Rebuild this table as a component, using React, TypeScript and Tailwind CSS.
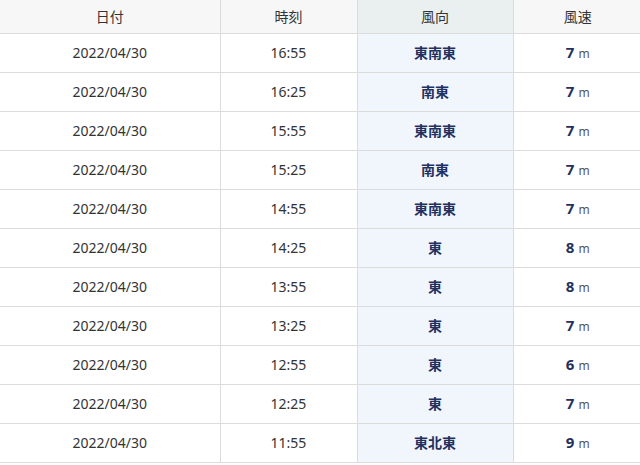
const ROWS: [string, string, string, number][] = [
  ['2022/04/30', '16:55', '東南東', 7],
  ['2022/04/30', '16:25', '南東', 7],
  ['2022/04/30', '15:55', '東南東', 7],
  ['2022/04/30', '15:25', '南東', 7],
  ['2022/04/30', '14:55', '東南東', 7],
  ['2022/04/30', '14:25', '東', 8],
  ['2022/04/30', '13:55', '東', 8],
  ['2022/04/30', '13:25', '東', 7],
  ['2022/04/30', '12:55', '東', 6],
  ['2022/04/30', '12:25', '東', 7],
  ['2022/04/30', '11:55', '東北東', 9],
]

const FONT = 'font-["Noto_Sans","Noto_Sans_CJK_JP",sans-serif]'

export default function App() {
  return (
    <div className={`w-[640px] h-[465px] overflow-hidden bg-white text-[#333] ${FONT}`}>
      <table className="w-[642px] border-collapse table-fixed text-[14px]">
        <colgroup>
          <col className="w-[220px]" />
          <col className="w-[137px]" />
          <col className="w-[156px]" />
          <col className="w-[129px]" />
        </colgroup>
        <thead>
          <tr className="h-[33px] bg-[#f7f7f7] border-b border-[#dcdcdc]">
            <th className="font-normal border-r border-[#dcdcdc]">日付</th>
            <th className="font-normal border-r border-[#dcdcdc]">時刻</th>
            <th className="font-normal border-r border-[#dcdcdc] bg-[#eaf0f0]">風向</th>
            <th className="font-normal">風速</th>
          </tr>
        </thead>
        <tbody>
          {ROWS.map(([date, time, dir, speed], i) => (
            <tr key={i} className="h-[39px] border-b border-[#dcdcdc]">
              <td className="text-center border-r border-[#dcdcdc]">{date}</td>
              <td className="text-center border-r border-[#dcdcdc]">{time}</td>
              <td className="text-center border-r border-[#dcdcdc] bg-[#f1f6fc] font-bold text-[#1f3160]">{dir}</td>
              <td className="text-center">
                <span className="font-bold text-[15px] text-[#1f3160]">{speed}</span>
                <span className="ml-1 text-[12px] text-[#555]">m</span>
              </td>
            </tr>
          ))}
        </tbody>
      </table>
    </div>
  )
}
